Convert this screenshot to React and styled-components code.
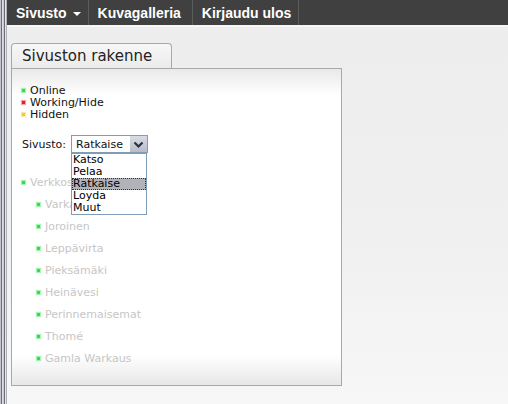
import styled, { createGlobalStyle } from "styled-components";

const GlobalStyle = createGlobalStyle`
  html, body {
    margin: 0;
    padding: 0;
    height: 404px;
    overflow: hidden;
  }
  body {
    font-family: "DejaVu Sans", Verdana, sans-serif;
    background: #efefef;
  }
`;

const Frame = styled.div`
  display: flex;
  height: 404px;
`;

const LeftEdge = styled.div`
  width: 7px;
  flex-shrink: 0;
  background: linear-gradient(
    to right,
    #c4c4ce 0 1px,
    #6c6c7c 1px 2px,
    #dcdce4 2px 3px,
    #c8c8d2 3px 4px,
    #6c6c7c 4px 5px,
    #e4e4ea 5px 6px,
    #b0b0b8 6px 7px
  );
`;

const Main = styled.div`
  flex: 1;
  display: flex;
  flex-direction: column;
  background: linear-gradient(#ededed, #f0f0f0 60%, #f7f7f7);
`;

const Nav = styled.nav`
  height: 25px;
  background: #404040;
  display: flex;
  border-bottom: 2px solid #f6f6f6;
`;

const NavItem = styled.a`
  display: flex;
  align-items: center;
  gap: 6px;
  padding: 0 ${(p) => p.$right}px 0 9px;
  border-right: 1px solid #5c5c5c;
  color: #fff;
  font-family: "Liberation Sans", Arial, sans-serif;
  font-weight: bold;
  font-size: 14px;
  text-decoration: none;
`;

const Caret = styled.span`
  width: 0;
  height: 0;
  margin-top: 2px;
  border-left: 4px solid transparent;
  border-right: 4px solid transparent;
  border-top: 4px solid #fff;
`;

const Content = styled.div`
  padding: 16px 0 0 4px;
  width: 331px;
`;

const Tab = styled.div`
  display: inline-block;
  height: 24px;
  padding: 0 10px;
  border: 1px solid #a9a9a9;
  border-bottom: none;
  border-radius: 4px 4px 0 0;
  background: linear-gradient(#f7f7f7, #ebebeb);
  color: #222;
  font-size: 15px;
  line-height: 24px;
  width: 139px;
`;

const Panel = styled.div`
  position: relative;
  border: 1px solid #a9a9a9;
  padding: 15px 10px 16px 10px;
  background: linear-gradient(
    #e9e9e9 0,
    #fff 26px,
    #fff calc(100% - 30px),
    #e7e7e7 100%
  );
  font-size: 11px;
`;

const Legend = styled.div`
  display: flex;
  flex-direction: column;
`;

const Row = styled.div`
  display: flex;
  align-items: center;
  height: ${(p) => p.$h || 12}px;
  color: ${(p) => p.$color || "#111"};
`;

const Dot = styled.span`
  width: 3px;
  height: 3px;
  margin-right: 5px;
  background: ${(p) => p.$color};
  box-shadow: 0 0 1px 1px ${(p) => p.$color}66;
`;

const SelectRow = styled.div`
  position: relative;
  display: flex;
  align-items: center;
  gap: 5px;
  margin-top: 15px;
  color: #111;
`;

const SelectBox = styled.div`
  position: relative;
  height: 16px;
  border: 1px solid #7f9db9;
  background: #fff;
  display: flex;
  align-items: center;
  justify-content: space-between;
  padding-left: 4px;
  box-sizing: content-box;
  width: 71px;
`;

const ArrowButton = styled.span`
  width: 17px;
  height: 16px;
  background: linear-gradient(#d8dce6, #b8bcc8);
  display: flex;
  align-items: center;
  justify-content: center;
`;

const List = styled.ul`
  position: absolute;
  top: 17px;
  left: -1px;
  width: 74px;
  margin: 0;
  padding: 0;
  list-style: none;
  background: #fff;
  border: 1px solid #7f9db9;
  z-index: 2;
`;

const Option = styled.li`
  height: 12px;
  line-height: 12px;
  padding-left: 1px;
  color: #000;
  background: ${(p) => (p.$active ? "#b2b2ba" : "transparent")};
  outline: ${(p) => (p.$active ? "1px dotted #333" : "none")};
  outline-offset: -1px;
`;

const Tree = styled.div`
  margin-top: 18px;
  color: #c6c6c6;
`;

const Children = styled.div`
  padding-left: 15px;
`;

const children = [
  "Varkaus",
  "Joroinen",
  "Leppävirta",
  "Pieksämäki",
  "Heinävesi",
  "Perinnemaisemat",
  "Thomé",
  "Gamla Warkaus",
];

const options = ["Katso", "Pelaa", "Ratkaise", "Loyda", "Muut"];

export default function App() {
  return (
    <>
      <GlobalStyle />
      <Frame>
        <LeftEdge />
        <Main>
          <Nav>
            <NavItem $right={7}>
              Sivusto <Caret />
            </NavItem>
            <NavItem $right={11}>Kuvagalleria</NavItem>
            <NavItem $right={7}>Kirjaudu ulos</NavItem>
          </Nav>
          <Content>
            <Tab>Sivuston rakenne</Tab>
            <Panel>
              <Legend>
                <Row>
                  <Dot $color="#2ee04c" />
                  Online
                </Row>
                <Row>
                  <Dot $color="#e0202c" />
                  Working/Hide
                </Row>
                <Row>
                  <Dot $color="#f0c830" />
                  Hidden
                </Row>
              </Legend>
              <SelectRow>
                Sivusto:
                <SelectBox>
                  Ratkaise
                  <ArrowButton>
                    <svg width="11" height="9" viewBox="0 0 11 9">
                      <path
                        d="M1.5 2.5 L5.5 6.5 L9.5 2.5"
                        fill="none"
                        stroke="#2a3140"
                        strokeWidth="2.2"
                      />
                    </svg>
                  </ArrowButton>
                  <List>
                    {options.map((o) => (
                      <Option key={o} $active={o === "Ratkaise"}>
                        {o}
                      </Option>
                    ))}
                  </List>
                </SelectBox>
              </SelectRow>
              <Tree>
                <Row $h={22} $color="#c6c6c6">
                  <Dot $color="#2ee04c" />
                  Verkkosivut Warkaus
                </Row>
                <Children>
                  {children.map((c) => (
                    <Row key={c} $h={22} $color="#c6c6c6">
                      <Dot $color="#2ee04c" />
                      {c}
                    </Row>
                  ))}
                </Children>
              </Tree>
            </Panel>
          </Content>
        </Main>
      </Frame>
    </>
  );
}
